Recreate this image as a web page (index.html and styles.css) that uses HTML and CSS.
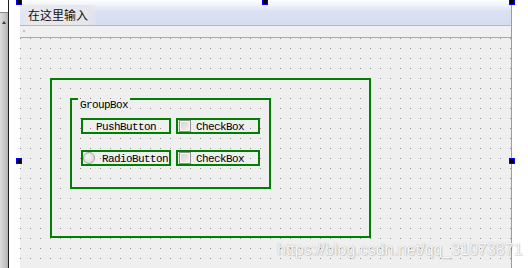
FILE: index.html
```html
<!DOCTYPE html>
<html lang="zh-CN">
<head>
    <meta charset="UTF-8">
    <title>Form Designer</title>
    <link rel="stylesheet" href="styles.css">
</head>
<body>

    <div class="left-bar">
        <div class="scroll"><span class="arrow"></span></div>
    </div>
    <div class="gutter"></div>

    <div class="form">
        <div class="menubar">
            <span class="menu-item">在这里输入</span>
        </div>
        <div class="toolstrip"><span class="grip"></span></div>

        <div class="canvas grid">
            <div class="frame">
                <div class="groupbox">
                    <span class="group-title">GroupBox</span>
                    <div class="row">
                        <div class="widget push">PushButton</div>
                        <div class="widget check"><span class="box"></span>CheckBox</div>
                    </div>
                    <div class="row">
                        <div class="widget radio"><span class="dot"></span>RadioButton</div>
                        <div class="widget check"><span class="box"></span>CheckBox</div>
                    </div>
                </div>
            </div>
        </div>
    </div>

    <!-- selection handles -->
    <span class="handle h-tl"></span>
    <span class="handle h-tm"></span>
    <span class="handle h-tr"></span>
    <span class="handle h-ml"></span>
    <span class="handle h-mr"></span>

    <div class="watermark">https://blog.csdn.net/qq_31073871</div>

</body>
</html>
```

FILE: styles.css
```css
body {
    display: flex;
    height: 268px;
    margin: 0;
    overflow: hidden;
    background: #fff;
    position: relative;
}

.left-bar {
    flex: none;
    width: 8px;
    padding-top: 12px;
    border-right: 1px solid #1e1e1e;
    box-sizing: content-box;
}

.scroll {
    height: 100%;
    border-top: 1px solid #8a8a8a;
    background: linear-gradient(to right, #dcdcdc, #c6c6c6 60%, #b2b2b2);
    position: relative;
}

.arrow {
    position: absolute;
    left: 2px;
    top: 8px;
    border-left: 2px solid transparent;
    border-right: 2px solid transparent;
    border-bottom: 3px solid #3a3a3a;
}

.gutter {
    flex: none;
    width: 11px;
}

.form {
    flex: none;
    width: 491px;
    border-right: 1px solid #9c9c9c;
    display: flex;
    flex-direction: column;
}

.menubar {
    height: 20px;
    padding-top: 5px;
    border-bottom: 1px solid #b3b8c8;
    background: linear-gradient(#fcfdff, #f1f3fa 20%, #dbe1f2 45%, #d6ddf0);
}

.menu-item {
    display: inline-block;
    height: 20px;
    padding: 0 8px;
    font: 12px/20px "Noto Sans CJK SC", sans-serif;
    color: #111;
    background: linear-gradient(to right, rgba(236,237,242,0.4), #e8e9ee 12%, #e6e7ec 88%, rgba(230,231,236,0.4));
}

.toolstrip {
    height: 11px;
    border-bottom: 1px solid #a9a9a9;
    background: #f0f0f0;
    position: relative;
}

.grip {
    position: absolute;
    left: 3px;
    top: 4px;
    width: 2px;
    height: 2px;
    background: #c4c4c4;
}

.grid {
    background-color: #8e8e8e;
    background-image:
        linear-gradient(to right, transparent 1px, #efefef 1px),
        linear-gradient(to bottom, transparent 1px, #efefef 1px);
    background-size: 10px 10px;
}

.canvas {
    flex: 1;
    background-position: 0 0;
}

.frame {
    margin: 40px 0 0 30px;
    width: 321px;
    height: 160px;
    padding: 18px;
    border: 2px solid #008000;
    box-sizing: border-box;
}

.groupbox {
    position: relative;
    width: 201px;
    height: 91px;
    padding: 18px 0 0 9px;
    border: 2px solid #008000;
    box-sizing: border-box;
    display: flex;
    flex-direction: column;
    gap: 16px;
}

.group-title,
.widget {
    font-family: "Liberation Mono", monospace;
    font-size: 11px;
    letter-spacing: -0.6px;
    color: #000;
}

.group-title {
    position: absolute;
    left: 6px;
    top: -2px;
    padding: 1px 2px 0;
    line-height: 12px;
    background-color: #8e8e8e;
    background-image:
        linear-gradient(to right, transparent 1px, #efefef 1px),
        linear-gradient(to bottom, transparent 1px, #efefef 1px);
    background-size: 10px 10px;
    background-position: 2px 0;
}

.row {
    display: flex;
    gap: 5px;
}

.widget {
    height: 16px;
    border: 2px solid #008000;
    box-sizing: border-box;
    display: flex;
    align-items: flex-start;
    line-height: 14px;
    white-space: nowrap;
}

.push {
    width: 90px;
    justify-content: center;
}

.radio {
    width: 90px;
}

.check {
    width: 84px;
}

.box {
    flex: none;
    width: 12px;
    height: 12px;
    margin: 0 5px 0 1px;
    border: 1px solid #8f8f8f;
    box-sizing: border-box;
    box-shadow: inset 0 0 0 1px #f6f6f6;
    background: linear-gradient(135deg, #d2d2d2, #f4f4f4);
}

.dot {
    flex: none;
    width: 12px;
    height: 12px;
    margin-right: 7px;
    border: 1px solid #a4a4a4;
    border-radius: 50%;
    box-sizing: border-box;
    background: radial-gradient(circle at 40% 40%, #f6f6f6, #d0d0d0);
}

.handle {
    position: absolute;
    width: 4px;
    height: 4px;
    background: #000;
    border: 1px solid #0000ff;
}

.h-tl { left: 16px; top: -1px; }
.h-tm { left: 262px; top: -1px; }
.h-tr { left: 509px; top: -1px; }
.h-ml { left: 16px; top: 158px; }
.h-mr { left: 509px; top: 158px; }

.watermark {
    position: absolute;
    left: 277px;
    top: 241px;
    font: 16px "Liberation Sans", sans-serif;
    color: rgba(255, 255, 255, 0.95);
    text-shadow: 0 0 1px rgba(0, 0, 0, 0.35), 1px 1px 1px rgba(0, 0, 0, 0.12);
    white-space: nowrap;
}
```
